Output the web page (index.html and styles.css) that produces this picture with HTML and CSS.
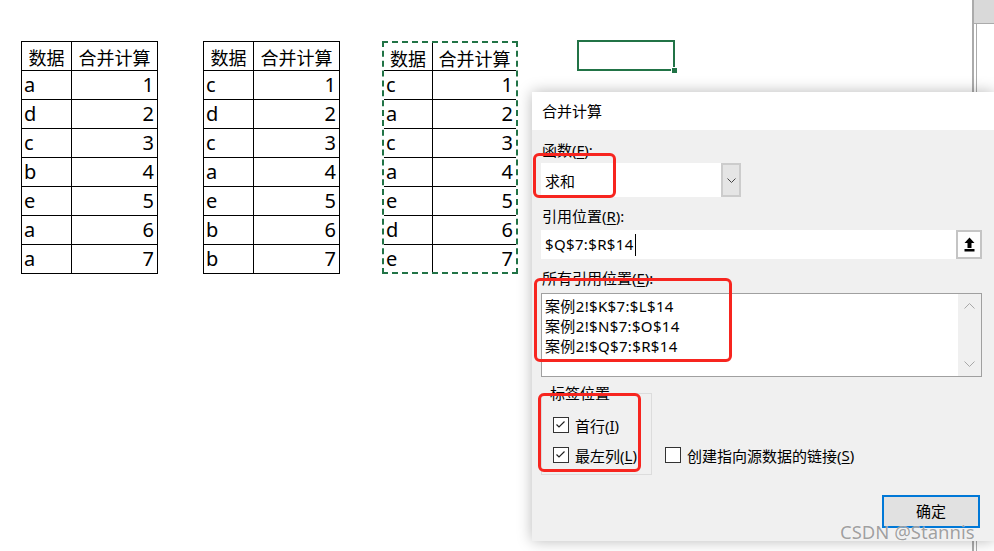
FILE: index.html
```html
<!DOCTYPE html>
<html>
<head>
<meta charset="utf-8">
<link rel="stylesheet" href="styles.css">
</head>
<body>
<div class="app">
  <div class="sheet">
    <div class="tbl">
      <div class="h">数据</div><div class="h">合并计算</div>
      <div class="k">a</div><div class="v">1</div>
      <div class="k">d</div><div class="v">2</div>
      <div class="k">c</div><div class="v">3</div>
      <div class="k">b</div><div class="v">4</div>
      <div class="k">e</div><div class="v">5</div>
      <div class="k">a</div><div class="v">6</div>
      <div class="k">a</div><div class="v">7</div>
    </div>
    <div class="tbl t2">
      <div class="h">数据</div><div class="h">合并计算</div>
      <div class="k">c</div><div class="v">1</div>
      <div class="k">d</div><div class="v">2</div>
      <div class="k">c</div><div class="v">3</div>
      <div class="k">a</div><div class="v">4</div>
      <div class="k">e</div><div class="v">5</div>
      <div class="k">b</div><div class="v">6</div>
      <div class="k">b</div><div class="v">7</div>
    </div>
    <div class="tbl t3">
      <div class="h">数据</div><div class="h">合并计算</div>
      <div class="k">c</div><div class="v">1</div>
      <div class="k">a</div><div class="v">2</div>
      <div class="k">c</div><div class="v">3</div>
      <div class="k">a</div><div class="v">4</div>
      <div class="k">e</div><div class="v">5</div>
      <div class="k">d</div><div class="v">6</div>
      <div class="k">e</div><div class="v">7</div>
    </div>
    <div class="sel"><span class="handle"></span></div>
  </div>
  <div class="rstrip"><div class="rtop"></div><div class="rbody"></div></div>
</div>

<div class="dialog">
  <div class="titlebar">合并计算</div>
  <div class="dbody">
    <div class="lbl">函数(<u>F</u>):</div>
    <div class="combo">
      <div class="cfield">求和</div>
      <div class="cbtn"><svg width="9" height="5" viewBox="0 0 9 5"><polyline points="0.5,0.5 4.5,4.5 8.5,0.5" fill="none" stroke="#444" stroke-width="1"/></svg></div>
    </div>
    <div class="lbl gap">引用位置(<u>R</u>):</div>
    <div class="inrow">
      <div class="inp">$Q$7:$R$14<span class="caret"></span></div>
      <div class="ubtn"><svg width="11" height="15" viewBox="0 0 11 15"><path d="M5.5 0.5 L10.5 6 L7.5 6 L7.5 11 L3.5 11 L3.5 6 L0.5 6 Z" fill="#000"/><rect x="0.5" y="12" width="10" height="2.5" fill="#000"/></svg></div>
    </div>
    <div class="lbl gap">所有引用位置(<u>E</u>):</div>
    <div class="list">
      <div class="items">
        <div>案例2!$K$7:$L$14</div>
        <div>案例2!$N$7:$O$14</div>
        <div>案例2!$Q$7:$R$14</div>
      </div>
      <div class="scroll">
        <svg width="11" height="6" viewBox="0 0 11 6"><polyline points="0.5,5.5 5.5,0.5 10.5,5.5" fill="none" stroke="#a8a8a8"/></svg>
        <svg width="11" height="6" viewBox="0 0 11 6"><polyline points="0.5,0.5 5.5,5.5 10.5,0.5" fill="none" stroke="#a8a8a8"/></svg>
      </div>
    </div>
    <div class="grow">
      <fieldset class="group">
        <legend>标签位置</legend>
        <div class="cb first"><span class="box"><svg width="13" height="13" viewBox="0 0 13 13"><polyline points="2.5,6.5 5,9 10.5,3.5" fill="none" stroke="#222" stroke-width="1.2"/></svg></span>首行(<u>I</u>)</div>
        <div class="cb second"><span class="box"><svg width="13" height="13" viewBox="0 0 13 13"><polyline points="2.5,6.5 5,9 10.5,3.5" fill="none" stroke="#222" stroke-width="1.2"/></svg></span>最左列(<u>L</u>)</div>
      </fieldset>
      <div class="cb link"><span class="box"></span>创建指向源数据的链接(<u>S</u>)</div>
    </div>
    <div class="btnrow"><div class="ok">确定</div></div>
  </div>
</div>

<div class="mark m1"></div>
<div class="mark m2"></div>
<div class="mark m3"></div>
<div class="wm">CSDN @Stannis</div>
</body>
</html>
```

FILE: styles.css
```css
html, body {
  margin: 0;
  padding: 0;
}
body {
  width: 994px;
  height: 551px;
  overflow: hidden;
  background: #fff;
  position: relative;
  font-family: "Noto Sans", "Noto Sans CJK SC", sans-serif;
  color: #000;
}
.app {
  display: flex;
  height: 551px;
}
.sheet {
  flex: 1;
  display: flex;
  align-items: flex-start;
  padding: 41px 0 0 21px;
}
.tbl {
  display: grid;
  grid-template-columns: 49px 85px;
  grid-template-rows: repeat(8, 28px);
  gap: 1px;
  padding: 1px;
  background: #000;
}
.tbl > div {
  background: #fff;
  font-size: 20px;
  line-height: 28px;
  white-space: nowrap;
}
.tbl .h {
  font-family: "Noto Sans CJK SC", sans-serif;
  font-size: 18px;
  text-align: center;
  line-height: 30px;
}
.tbl .k {
  padding-left: 2px;
}
.tbl .v {
  text-align: right;
  padding-right: 3px;
}
.t2 {
  margin-left: 45px;
}
.t3 {
  margin-left: 42px;
  padding: 0;
  border: 2px dashed #217346;
  background-clip: padding-box;
  grid-template-columns: 48px 83px;
  grid-template-rows: 27px repeat(6, 28px) 27px;
}
.sel {
  margin-left: 59px;
  margin-top: -1px;
  width: 94px;
  height: 27px;
  border: 2px solid #217346;
  position: relative;
}
.handle {
  position: absolute;
  right: -4px;
  bottom: -4px;
  width: 5px;
  height: 5px;
  background: #217346;
  border-left: 1px solid #fff;
  border-top: 1px solid #fff;
}
.rstrip {
  width: 20px;
  border-left: 2px solid #ababab;
  display: flex;
  flex-direction: column;
}
.rtop {
  height: 23px;
  background: #d9d9d9;
  border-bottom: 1px solid #ababab;
}
.rbody {
  flex: 1;
  margin-left: 2px;
  border-left: 1px solid #ababab;
}

.dialog {
  position: absolute;
  left: 532px;
  top: 92px;
  width: 462px;
  background: #f0f0f0;
  box-shadow: 0 0 14px rgba(0, 0, 0, 0.28);
  font-size: 15px;
}
.titlebar {
  height: 38px;
  background: #fff;
  padding-left: 10px;
  line-height: 38px;
  font-family: "Noto Sans CJK SC", sans-serif;
}
.dbody {
  padding: 10px 12px 13px 9px;
  display: flex;
  flex-direction: column;
}
.lbl {
  line-height: 20px;
  padding-left: 1px;
}
.lbl.gap {
  margin-top: 9px;
}
u {
  text-decoration-thickness: 1px;
  text-underline-offset: 2px;
}
.combo {
  display: flex;
  width: 200px;
  height: 34px;
  margin-top: 3px;
}
.cfield {
  flex: 1;
  background: #fff;
  padding-left: 4px;
  line-height: 36px;
}
.cbtn {
  width: 16px;
  border: 2px solid #cccccc;
  background: #e5e5e5;
  display: flex;
  align-items: center;
  justify-content: center;
}
.inrow {
  display: flex;
  height: 29px;
  margin-top: 4px;
}
.inp {
  flex: 1;
  background: #fff;
  padding-left: 4px;
  line-height: 29px;
  display: flex;
  align-items: center;
  letter-spacing: 0.35px;
}
.caret {
  display: inline-block;
  width: 0;
  height: 22px;
  border-right: 1px solid #000;
  margin-left: 1px;
}
.ubtn {
  width: 22px;
  border: 2px solid #c4c4c4;
  background: #fdfdfd;
  display: flex;
  align-items: center;
  justify-content: center;
}
.list {
  display: flex;
  height: 82px;
  margin-top: 5px;
  border: 1px solid #a0a0a0;
}
.items {
  flex: 1;
  background: #fff;
  padding: 2px 0 0 3px;
  line-height: 20px;
  letter-spacing: 0.35px;
}
.scroll {
  width: 23px;
  background: #f0f0f0;
  display: flex;
  flex-direction: column;
  align-items: center;
  justify-content: space-between;
  padding: 9px 0 9px;
}
.grow {
  display: flex;
  align-items: flex-end;
  margin-top: 6px;
}
.group {
  margin: 0;
  width: 111px;
  min-width: 0;
  box-sizing: border-box;
  border: 1px solid #dcdcdc;
  padding: 0 0 9px 11px;
}
.group legend {
  padding: 0 2px;
  margin-left: -5px;
  line-height: 20px;
}
.cb {
  display: flex;
  align-items: center;
  height: 20px;
  white-space: nowrap;
}
.cb.first {
  margin-top: 12px;
}
.cb.second {
  margin-top: 10px;
}
.cb.link {
  margin-left: 13px;
  margin-bottom: 10px;
}
.box {
  width: 14px;
  height: 14px;
  border: 1px solid #333;
  background: #fff;
  margin-right: 6px;
  display: flex;
}
.btnrow {
  display: flex;
  justify-content: flex-end;
  margin-top: 20px;
  padding-right: 2px;
}
.ok {
  width: 94px;
  height: 29px;
  border: 2px solid #0078d7;
  background: #e1e1e1;
  text-align: center;
  line-height: 29px;
}
.mark {
  position: absolute;
  border: 3px solid #f7251f;
  border-radius: 6px;
}
.m1 {
  left: 533px;
  top: 153px;
  width: 77px;
  height: 39px;
}
.m2 {
  left: 534px;
  top: 278px;
  width: 192px;
  height: 78px;
}
.m3 {
  left: 538px;
  top: 393px;
  width: 97px;
  height: 73px;
}
.wm {
  position: absolute;
  left: 840px;
  top: 519px;
  font-size: 18.5px;
  line-height: 26px;
  color: rgba(135, 135, 135, 0.8);
  text-shadow: 0 0 1px #fff;
  white-space: nowrap;
}
```
